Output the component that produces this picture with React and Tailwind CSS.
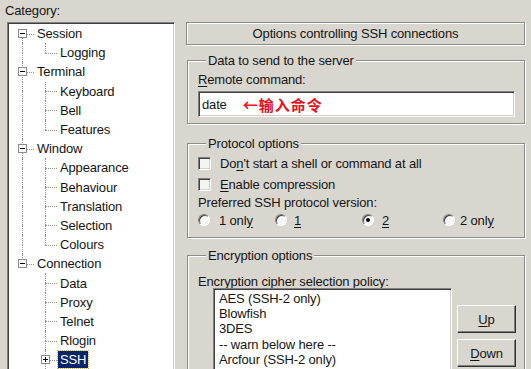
import React from "react";

const tree = [
  { label: "Session", level: 0, exp: "-", first: true },
  { label: "Logging", level: 1, last: true },
  { label: "Terminal", level: 0, exp: "-" },
  { label: "Keyboard", level: 1 },
  { label: "Bell", level: 1 },
  { label: "Features", level: 1, last: true },
  { label: "Window", level: 0, exp: "-" },
  { label: "Appearance", level: 1 },
  { label: "Behaviour", level: 1 },
  { label: "Translation", level: 1 },
  { label: "Selection", level: 1 },
  { label: "Colours", level: 1, last: true },
  { label: "Connection", level: 0, exp: "-", lastRoot: true },
  { label: "Data", level: 1, underLast: true },
  { label: "Proxy", level: 1, underLast: true },
  { label: "Telnet", level: 1, underLast: true },
  { label: "Rlogin", level: 1, underLast: true },
  { label: "SSH", level: 1, underLast: true, exp: "+", selected: true },
];

function Expander({ sign }) {
  return (
    <div className="relative z-10 flex h-[9px] w-[9px] items-center justify-center border border-[#8a8a8a] bg-white">
      <div className="h-[1px] w-[5px] bg-black" />
      {sign === "+" && <div className="absolute left-[3px] top-[1px] h-[5px] w-[1px] bg-black" />}
    </div>
  );
}

function Cell({ top, bottom, horiz, exp }) {
  return (
    <div className="relative flex w-[23px] shrink-0 items-center self-stretch">
      {top && <div className="absolute left-[11px] top-0 h-1/2 border-l border-dotted border-[#909090]" />}
      {bottom && <div className="absolute bottom-0 left-[11px] h-1/2 border-l border-dotted border-[#909090]" />}
      {horiz && <div className="absolute left-[11px] right-0 top-1/2 border-t border-dotted border-[#909090]" />}
      {exp && (
        <div className="absolute left-[7px] top-1/2 -mt-[5px]">
          <Expander sign={exp} />
        </div>
      )}
    </div>
  );
}

function TreeRow({ r }) {
  return (
    <div className="flex h-[19.2px] shrink-0 items-center">
      {r.level === 0 ? (
        <Cell top={!r.first} bottom={!r.lastRoot} horiz exp={r.exp} />
      ) : (
        <>
          <Cell top={!r.underLast} bottom={!r.underLast} />
          <Cell top bottom={!r.last} horiz exp={r.exp} />
        </>
      )}
      {r.selected ? (
        <span className="ml-[1px] bg-[#0a246a] px-[2px] leading-[17px] text-white outline outline-1 outline-dotted outline-[#c8b060]">
          {r.label}
        </span>
      ) : (
        <span className="ml-[3px] whitespace-nowrap">{r.label}</span>
      )}
    </div>
  );
}

function Group({ title, className, children }) {
  return (
    <fieldset
      className={
        "ml-[1px] w-[338px] min-w-0 shrink-0 border border-[#8c8c8c] pl-[10px] shadow-[inset_1px_1px_0_#ffffff,1px_1px_0_#ffffff] " +
        (className || "")
      }
    >
      <legend className="ml-[8px] bg-[#d9d6cf] px-[2px] leading-[15px]">{title}</legend>
      {children}
    </fieldset>
  );
}

function Checkbox() {
  return (
    <div className="h-[13px] w-[13px] shrink-0 border border-b-white border-l-[#808080] border-r-white border-t-[#808080] bg-[#f4f4f2] shadow-[inset_1px_1px_0_#404040,inset_-1px_-1px_0_#d4d0c8]" />
  );
}

function Radio({ on }) {
  return (
    <div className="flex h-[12px] w-[12px] shrink-0 items-center justify-center rounded-full border border-b-white border-l-[#808080] border-r-white border-t-[#808080] bg-[#f6f6f4] shadow-[inset_1px_1px_0_#404040]">
      {on && <div className="h-[4px] w-[4px] rounded-full bg-black" />}
    </div>
  );
}

function Button({ children }) {
  return (
    <div className="flex h-[28px] w-[59px] items-center justify-center border border-b-[#303030] border-l-white border-r-[#303030] border-t-white bg-[#d9d6cf] shadow-[inset_-1px_-1px_0_#808080]">
      {children}
    </div>
  );
}

const U = ({ children }) => <span className="underline underline-offset-[2px]">{children}</span>;

export default function App() {
  return (
    <div
      className="flex h-[369px] w-[531px] overflow-hidden bg-[#d9d6cf] text-[13px] leading-[15px] tracking-[-0.15px] text-[#151515]"
      style={{ fontFamily: '"Liberation Sans", Arial, sans-serif' }}
    >
      {/* Left: category tree */}
      <div className="flex w-[175px] shrink-0 flex-col pl-[5px]">
        <div className="shrink-0 pt-[3px]">Category:</div>
        <div className="ml-[2px] mt-[4px] h-[360px] w-[168px] shrink-0 overflow-hidden border border-b-white border-l-[#808080] border-r-white border-t-[#808080] bg-white pl-[3px] pt-[1px] shadow-[inset_1px_1px_0_#404040,inset_-1px_-1px_0_#d4d0c8]">
          {tree.map((r) => (
            <TreeRow key={r.label} r={r} />
          ))}
        </div>
      </div>

      {/* Right: options panel */}
      <div className="ml-[11px] flex w-[340px] flex-col pt-[22px]">
        <div className="flex h-[23px] w-[339px] shrink-0 items-center justify-center border border-[#8c8c8c] shadow-[inset_1px_1px_0_#ffffff,1px_1px_0_#ffffff]">
          Options controlling SSH connections
        </div>

        <Group title="Data to send to the server" className="mt-[8px] pb-[6px]">
          <div className="mt-[4px]">
            <U>R</U>emote command:
          </div>
          <div className="mt-[4px] flex h-[26px] w-[317px] items-center border border-b-white border-l-[#808080] border-r-white border-t-[#808080] bg-white pl-[3px] shadow-[inset_1px_1px_0_#404040,inset_-1px_-1px_0_#d4d0c8]">
            <span>date</span>
            <span
              className="ml-[16px] text-[15px] font-bold tracking-[1px] text-[#e8101a]"
              style={{ fontFamily: '"Noto Sans CJK SC", "Noto Sans", sans-serif' }}
            >
              ←输入命令
            </span>
          </div>
        </Group>

        <Group title="Protocol options" className="mt-[12px] pb-[8px]">
          <div className="mt-[2px] flex h-[21px] items-center">
            <Checkbox />
            <span className="ml-[9px]">
              Do<U>n</U>'t start a shell or command at all
            </span>
          </div>
          <div className="flex h-[20px] items-center">
            <Checkbox />
            <span className="ml-[9px]">
              <U>E</U>nable compression
            </span>
          </div>
          <div className="mt-[1px]">Preferred SSH protocol version:</div>
          <div className="mt-[1px] flex h-[18px] items-center">
            <div className="flex w-[77px] items-center">
              <Radio />
              <span className="ml-[9px]">
                1 onl<U>y</U>
              </span>
            </div>
            <div className="flex w-[87px] items-center">
              <Radio />
              <span className="ml-[7px]">
                <U>1</U>
              </span>
            </div>
            <div className="flex w-[81px] items-center">
              <Radio on />
              <span className="ml-[8px]">
                <U>2</U>
              </span>
            </div>
            <div className="flex items-center">
              <Radio />
              <span className="ml-[5px]">
                2 onl<U>y</U>
              </span>
            </div>
          </div>
        </Group>

        <Group title="Encryption options" className="mt-[10px] h-[140px]">
          <div className="mt-[12px] leading-[13px]">
            Encryption cipher <U>s</U>election policy:
          </div>
          <div className="flex items-start">
            <div className="ml-[15px] h-[100px] w-[239px] border border-b-white border-l-[#808080] border-r-white border-t-[#808080] bg-white pl-[5px] pt-[2px] leading-[15.2px] shadow-[inset_1px_1px_0_#404040,inset_-1px_-1px_0_#d4d0c8]">
              <div>AES (SSH-2 only)</div>
              <div>Blowfish</div>
              <div>3DES</div>
              <div>-- warn below here --</div>
              <div>Arcfour (SSH-2 only)</div>
            </div>
            <div className="ml-[5px] mt-[17px] flex flex-col gap-[6px]">
              <Button>
                <U>U</U>p
              </Button>
              <Button>
                <U>D</U>own
              </Button>
            </div>
          </div>
        </Group>
      </div>
    </div>
  );
}
